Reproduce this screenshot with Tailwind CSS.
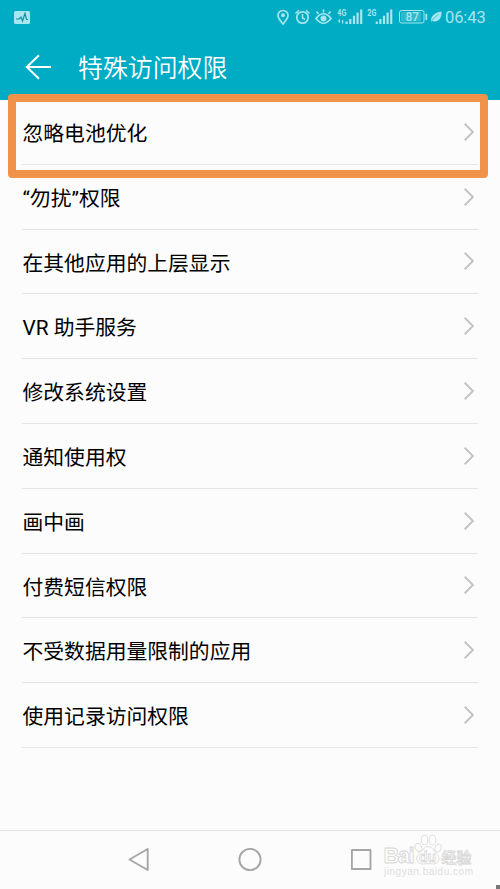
<!DOCTYPE html>
<html lang="zh-CN">
<head>
  <meta charset="UTF-8" />
  <meta name="viewport" content="width=device-width, initial-scale=1.0"/>
  <title>特殊访问权限</title>
  <script src="https://cdn.jsdelivr.net/npm/@tailwindcss/browser@4"></script>
</head>
<body class="bg-[#fcfcfc] text-black font-[Roboto,'Noto_Sans_CJK_SC',sans-serif]">

  <div class="relative w-[500px] h-[889px] flex flex-col overflow-hidden">

    <header class="h-[100px] shrink-0 bg-[#00acc4] text-white flex flex-col">
      <!-- status bar -->
      <div class="h-[34px] flex items-center pl-[14px] pr-[13px] text-[#a5e6ef]">
        <svg class="w-4 h-[13px]" viewBox="0 0 16 13">
          <rect width="16" height="13" rx="1.5" fill="currentColor"/>
          <path d="M2 8h3l2-2 1.500 4L11 2.500l1.500 6H14" fill="none" stroke="#168fa3" stroke-width="1.200"/>
        </svg>
        <svg class="ml-auto w-[165px] h-[34px]" viewBox="277 0 165 34" fill="none" stroke="currentColor">
          <!-- location -->
          <path d="M283 24c-2.500-3.300-5-5.600-5-8.500a5 5 0 0 1 10 0c0 2.900-2.500 5.200-5 8.500z" stroke-width="1.700"/>
          <circle cx="283" cy="15.300" r="2" fill="currentColor" stroke="none"/>
          <!-- alarm -->
          <circle cx="302.500" cy="17.500" r="5.700" stroke-width="1.700"/>
          <path d="M302.500 14v4l2.500 1.500M295.500 13.500l3.500-3.300M309.500 13.500l-3.500-3.300" stroke-width="1.500"/>
          <!-- eye comfort -->
          <path d="M316 18.500q7.500-9.500 15 0q-7.500 9.500-15 0z" stroke-width="1.700"/>
          <circle cx="323.500" cy="18.500" r="3" fill="currentColor" stroke="none"/>
          <path d="M323.500 12.500V9.500M318.500 14l-2-2.500M328.500 14l2-2.500" stroke-width="1.600"/>
          <!-- signals -->
          <g fill="currentColor" stroke="none">
            <text x="337.300" y="16.300" font-size="9" font-weight="700" textLength="9" lengthAdjust="spacingAndGlyphs">4G</text>
            <path d="M338 21l2-2.300v4.600zM342 20h1.200v3.500H342z"/>
            <path d="M345.500 21.500h2.200v2.500h-2.200zM349.200 19h2.200v5h-2.200zM352.900 15.800h2.200v8.200h-2.200zM356.500 12.500h2.200V24h-2.200zM360.100 9.500h2.200V24h-2.200z"/>
            <text x="367.300" y="16.300" font-size="9" font-weight="700" textLength="9" lengthAdjust="spacingAndGlyphs">2G</text>
            <path d="M375.700 21.500h2.200v2.500h-2.200zM379.300 19h2.200v5h-2.200zM382.900 15.800h2.200v8.200h-2.200zM386.500 12.500h2.200V24h-2.200zM390.100 9.500h2.200V24h-2.200z"/>
          </g>
          <!-- battery -->
          <rect x="399.500" y="10.500" width="24.500" height="12.500" rx="2" stroke-width="1"/>
          <rect x="401" y="12" width="20" height="9.500" fill="#2fb9cd" stroke="none"/>
          <path d="M426.300 13.800v6" stroke-width="1.800"/>
          <text x="405.500" y="21" font-size="12" font-weight="500" fill="currentColor" stroke="none" textLength="13.500">87</text>
          <!-- power saving leaf -->
          <path d="M431 22c-.8-5 3-9.500 10.500-10.500c.5 6-3 11.500-9 9.500z" fill="currentColor" stroke="none"/>
          <path d="M430.500 22.500c2-3.500 4.500-5.500 8-8" stroke="#00acc4" stroke-width=".6"/>
        </svg>
        <span class="ml-[3px] w-[42px] pt-[2px] whitespace-nowrap text-[16.5px] leading-none tracking-[-0.1px]">06:43</span>
      </div>
      <!-- title bar -->
      <div class="h-[66px] flex items-center pl-[25px]">
        <svg class="w-[27px] h-[26px]" viewBox="0 0 27 26" fill="none" stroke="currentColor" stroke-width="2">
          <path d="M26 13H2M14 1.200L1.800 13L14 24.800"/>
        </svg>
        <h1 class="ml-[26px] pt-[5px] text-[24.9px] leading-none font-[350]">特殊访问权限</h1>
      </div>
    </header>

    <main id="permissionList" class="flex-1 px-[22px]"></main>

    <!-- navigation keys -->
    <nav class="h-[59px] shrink-0 border-t border-[#e4e4e4] flex items-center justify-center gap-[89px] text-[#a6a6a6]">
      <svg class="w-[22px] h-6" viewBox="0 0 22 24" fill="none" stroke="currentColor" stroke-width="1.900" stroke-linejoin="round">
        <path d="M2.500 11.500L20.700 1v21z"/>
      </svg>
      <svg class="w-6 h-6" viewBox="0 0 24 24" fill="none" stroke="currentColor" stroke-width="1.900">
        <circle cx="12" cy="11.500" r="10.600"/>
      </svg>
      <svg class="w-[22px] h-6" viewBox="0 0 22 24" fill="none" stroke="currentColor" stroke-width="1.900" stroke-linejoin="round">
        <path d="M.9 2h18.600v19H.9z"/>
      </svg>
    </nav>

    <!-- highlight frame -->
    <div class="absolute left-[8px] top-[94px] w-[480px] h-[84px] rounded-[4px] border-8 border-[#f1924b]"></div>

    <!-- watermark -->
    <svg class="absolute left-[380px] top-[830px] w-[100px] h-[50px] font-['Liberation_Sans','Noto_Sans_CJK_SC',sans-serif]" viewBox="380 830 100 50" fill="#fdfdfd" stroke="#d6d6d6" stroke-width=".8">
      <text x="383.500" y="863" font-size="22" font-weight="700" textLength="31">Bai</text>
      <ellipse cx="418.500" cy="847.500" rx="3.200" ry="4.300" transform="rotate(-20 418.500 847.500)"/>
      <ellipse cx="424.500" cy="840" rx="3.300" ry="4.800"/>
      <ellipse cx="432.500" cy="840" rx="3.300" ry="4.800"/>
      <ellipse cx="438" cy="848" rx="3" ry="4.200" transform="rotate(20 438 848)"/>
      <path d="M428 846.500c4 0 5.500 4 8.500 7c5 5 2 11-4 10.500c-3-.5-6-.5-9 0c-6.500.5-9-5.500-4.500-10.500c3.500-2.500 5-7 9-7z"/>
      <text x="419" y="862" font-size="15" font-weight="700" textLength="17" lengthAdjust="spacingAndGlyphs">du</text>
      <text x="441.500" y="862.500" font-size="15" font-weight="500" textLength="30">经验</text>
      <text x="384" y="874.500" font-size="10" fill="#dedede" stroke="none" textLength="89">jingyan.baidu.com</text>
    </svg>

    <div class="absolute right-0 bottom-0 w-[4px] h-[4px] bg-[#777777]"></div>
  </div>

  <script>
    const permissions = [
      '忽略电池优化',
      '“勿扰”权限',
      '在其他应用的上层显示',
      'VR 助手服务',
      '修改系统设置',
      '通知使用权',
      '画中画',
      '付费短信权限',
      '不受数据用量限制的应用',
      '使用记录访问权限'
    ];

    document.getElementById('permissionList').innerHTML = permissions.map(name => `
      <div class="h-[64.8px] flex items-center justify-between border-b border-[#e4e4e4]">
        <span class="pl-[0.5px] pt-[5px] text-[20.8px] leading-none whitespace-nowrap">${name}</span>
        <svg class="w-[10px] h-[18px] mr-[4px]" viewBox="0 0 10 18" fill="none" stroke="#c2c2c2" stroke-width="1.900">
          <path d="M.7 .8L9 9L.7 17.200"/>
        </svg>
      </div>
    `).join('');
  </script>

</body>
</html>
